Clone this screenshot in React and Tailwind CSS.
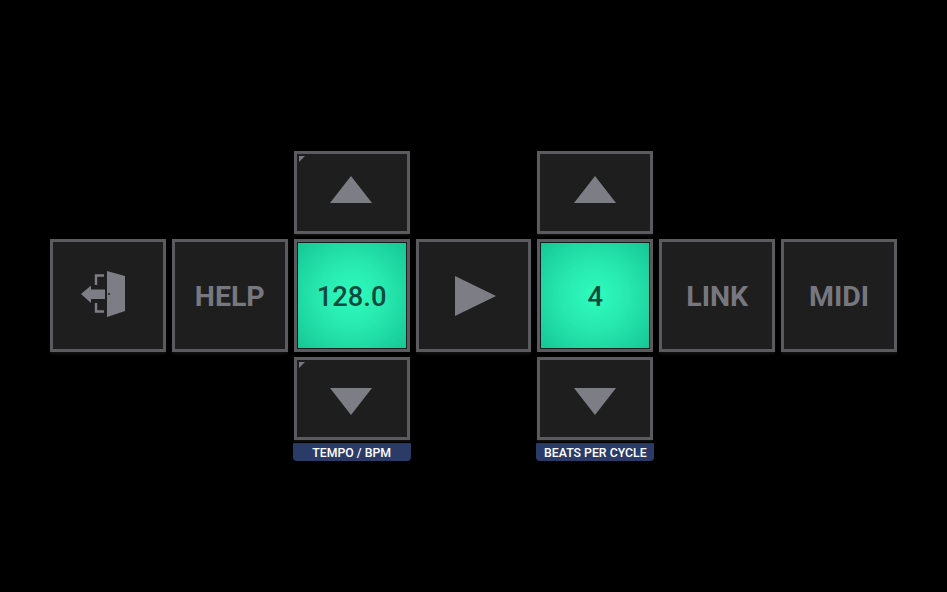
import React from "react";

const btn =
  "relative flex w-full items-center justify-center box-border border-[3px] border-[#5b5b5f] bg-[#1e1e1e] shadow-[0_2px_2px_#111]";
const arrowFill = "#7d7d85";

const Corner = () => (
  <svg className="absolute left-[2px] top-[2px]" width="6" height="6" viewBox="0 0 6 6">
    <polygon points="0,0 6,0 0,6" fill="#77777c" />
  </svg>
);

const Up = ({ corner }) => (
  <button className={`${btn} h-[83px]`}>
    {corner && <Corner />}
    <svg className="mb-[6px] mr-px" width="42" height="27" viewBox="0 0 42 27">
      <polygon points="21,0 42,27 0,27" fill={arrowFill} />
    </svg>
  </button>
);

const Down = ({ corner }) => (
  <button className={`${btn} h-[83px]`}>
    {corner && <Corner />}
    <svg className="mr-px mt-[5px]" width="42" height="27" viewBox="0 0 42 27">
      <polygon points="0,0 42,0 21,27" fill={arrowFill} />
    </svg>
  </button>
);

const TextBtn = ({ label }) => (
  <button className={`${btn} h-[113px] pt-[4px] text-[28.5px] font-bold text-[#77777f]`}>{label}</button>
);

const Value = ({ value }) => (
  <div className="h-[113px] box-border border-[3px] border-[#5b5b5f] bg-[#10201c] p-px">
    <div className="flex h-full items-center justify-center bg-[radial-gradient(circle,#2ffcbe_0%,#27e8ae_45%,#16c695_100%)] pt-[3px] text-[27.3px] font-medium text-[#0e4a3e]">
      {value}
    </div>
  </div>
);

const Label = ({ children }) => (
  <div className="-mx-px flex h-[18px] items-center justify-center rounded-b-[4px] rounded-t-[1px] bg-[#2b3b68] pt-[2px] text-[12.3px] font-medium text-white">
    {children}
  </div>
);

export default function App() {
  return (
    <div className="h-[592px] w-[947px] overflow-hidden bg-black pl-[50px] pt-[151px] font-['Roboto',sans-serif]">
      <div className="grid w-[847px] grid-cols-7 grid-rows-[83px_113px_83px_18px] gap-x-[6px] gap-y-[5px]">
        {/* top row */}
        <div className="col-start-3">
          <Up corner />
        </div>
        <div className="col-start-5">
          <Up />
        </div>

        {/* main row */}
        <button className={`${btn} col-start-1 row-start-2 h-[113px]`}>
          <svg className="mb-[2px] mr-[10px]" width="44" height="47" viewBox="0 0 44 47">
            <polygon points="26,0 44,5 44,40 26,46" fill={arrowFill} />
            <circle cx="28" cy="23" r="1" fill="#1e1e1e" />
            <polygon points="0,23 10,14.5 10,18.5 24,18.5 24,28 10,28 10,32" fill={arrowFill} />
            <path d="M23 4.5H15V14M15 32V40.5H23" fill="none" stroke={arrowFill} strokeWidth="2.4" />
          </svg>
        </button>
        <div className="col-start-2 row-start-2">
          <TextBtn label="HELP" />
        </div>
        <div className="col-start-3 row-start-2">
          <Value value="128.0" />
        </div>
        <button className={`${btn} col-start-4 row-start-2 h-[113px]`}>
          <svg className="ml-[4px]" width="41" height="40" viewBox="0 0 41 40">
            <polygon points="0,0 41,20 0,40" fill={arrowFill} />
          </svg>
        </button>
        <div className="col-start-5 row-start-2">
          <Value value="4" />
        </div>
        <div className="col-start-6 row-start-2">
          <TextBtn label="LINK" />
        </div>
        <div className="col-start-7 row-start-2">
          <TextBtn label="MIDI" />
        </div>

        {/* bottom row */}
        <div className="col-start-3 row-start-3">
          <Down corner />
        </div>
        <div className="col-start-5 row-start-3">
          <Down />
        </div>

        {/* captions */}
        <div className="col-start-3 row-start-4 -mt-[2px]">
          <Label>TEMPO / BPM</Label>
        </div>
        <div className="col-start-5 row-start-4 -mt-[2px]">
          <Label>BEATS PER CYCLE</Label>
        </div>
      </div>
    </div>
  );
}
